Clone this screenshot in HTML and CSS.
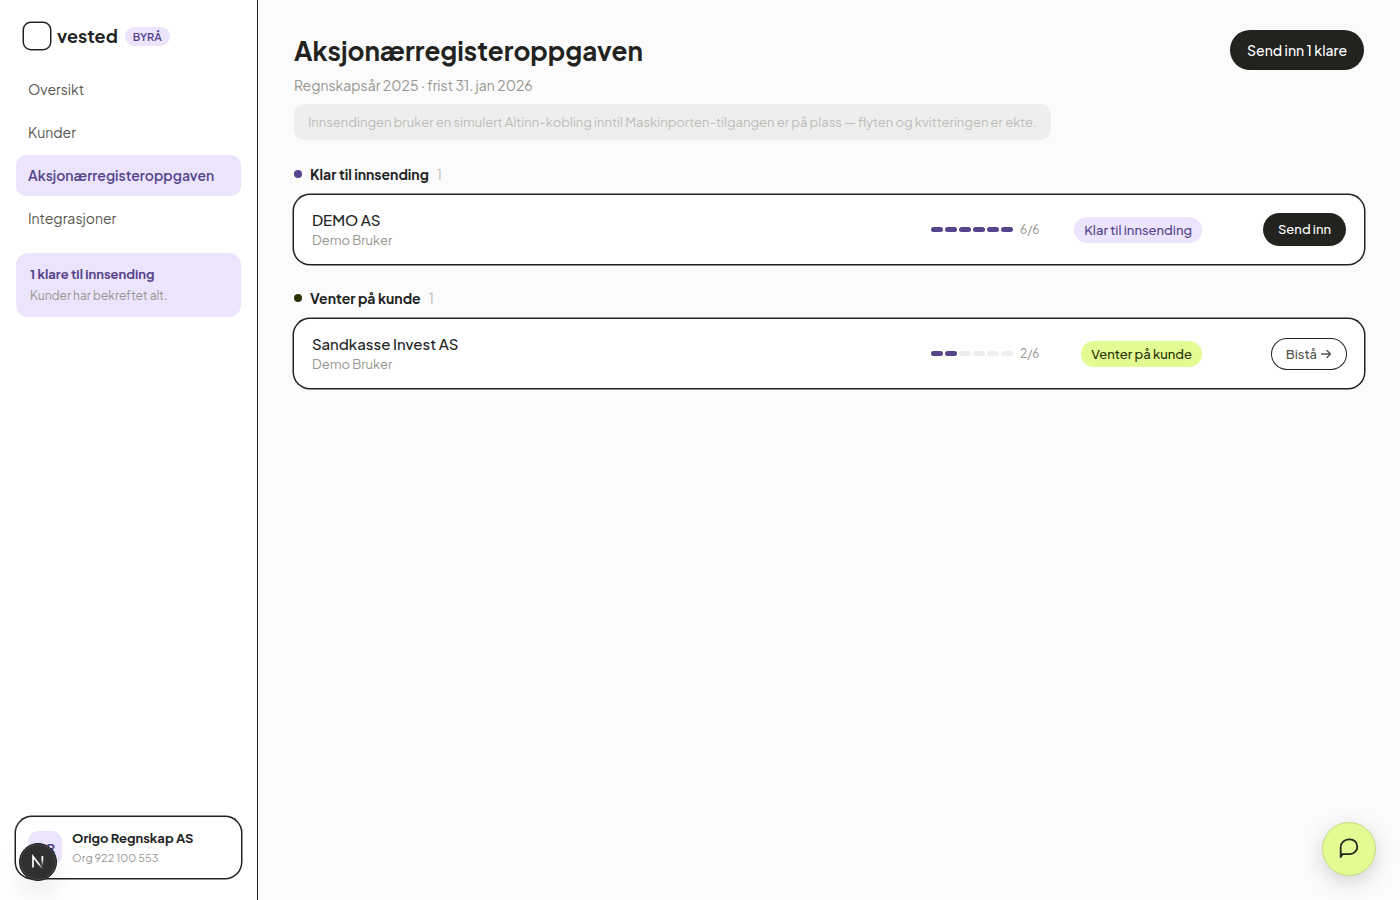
FILE: index.html
```html
<!DOCTYPE html>
<html lang="nb">
<head>
    <meta charset="UTF-8">
    <meta name="viewport" content="width=device-width, initial-scale=1.0">
    <title>Aksjonærregisteroppgaven – vested</title>
    <link rel="stylesheet" href="styles.css">
</head>
<body>
    <div class="app">
        <aside class="sidebar">
            <div class="brand">
                <span class="brand-mark"></span>
                <span class="brand-name">vested</span>
                <span class="brand-tag">BYRÅ</span>
            </div>

            <nav class="nav">
                <a class="nav-link" href="#">Oversikt</a>
                <a class="nav-link" href="#">Kunder</a>
                <a class="nav-link active" href="#">Aksjonærregisteroppgaven</a>
                <a class="nav-link" href="#">Integrasjoner</a>
            </nav>

            <a class="callout" href="#">
                <span class="callout-title">1 klare til innsending</span>
                <span class="callout-text">Kunder har bekreftet alt.</span>
            </a>

            <div class="account">
                <span class="avatar">OR</span>
                <div class="account-info">
                    <span class="account-name">Origo Regnskap AS</span>
                    <span class="account-org">Org 922 100 553</span>
                </div>
            </div>
        </aside>

        <main class="main">
            <header class="page-header">
                <div class="page-intro">
                    <h1>Aksjonærregisteroppgaven</h1>
                    <p class="subtitle">Regnskapsår 2025 · frist 31. jan 2026</p>
                    <p class="notice">Innsendingen bruker en simulert Altinn-kobling inntil Maskinporten-tilgangen er på plass — flyten og kvitteringen er ekte.</p>
                </div>
                <button class="btn btn-dark btn-large" type="button">Send inn 1 klare</button>
            </header>

            <section class="group">
                <h2 class="group-title"><span class="dot dot-purple"></span>Klar til innsending <span class="count">1</span></h2>
                <div class="row">
                    <div class="client">
                        <span class="client-name">DEMO AS</span>
                        <span class="client-user">Demo Bruker</span>
                    </div>
                    <div class="progress">
                        <span class="steps"><i class="done"></i><i class="done"></i><i class="done"></i><i class="done"></i><i class="done"></i><i class="done"></i></span>
                        <span class="steps-label">6/6</span>
                    </div>
                    <span class="chip chip-purple">Klar til innsending</span>
                    <button class="btn btn-dark" type="button">Send inn</button>
                </div>
            </section>

            <section class="group">
                <h2 class="group-title"><span class="dot dot-olive"></span>Venter på kunde <span class="count">1</span></h2>
                <div class="row">
                    <div class="client">
                        <span class="client-name">Sandkasse Invest AS</span>
                        <span class="client-user">Demo Bruker</span>
                    </div>
                    <div class="progress">
                        <span class="steps"><i class="done"></i><i class="done"></i><i></i><i></i><i></i><i></i></span>
                        <span class="steps-label">2/6</span>
                    </div>
                    <span class="chip chip-lime">Venter på kunde</span>
                    <button class="btn btn-outline" type="button">Bistå
                        <svg width="12" height="12" viewBox="0 0 12 12" fill="none" stroke="currentColor" stroke-width="1.4" stroke-linecap="round" stroke-linejoin="round" aria-hidden="true"><path d="M1.5 6h9M7 2.5 10.5 6 7 9.5"/></svg>
                    </button>
                </div>
            </section>
        </main>
    </div>

    <button class="dev-badge" type="button" aria-label="Next.js">
        <svg width="18" height="18" viewBox="0 0 18 18" fill="none" aria-hidden="true">
            <defs>
                <linearGradient id="stem" x1="0" y1="2" x2="0" y2="13" gradientUnits="userSpaceOnUse">
                    <stop offset="0.4" stop-color="#fff"/>
                    <stop offset="1" stop-color="#fff" stop-opacity="0"/>
                </linearGradient>
                <linearGradient id="slash" x1="9" y1="9" x2="14" y2="16" gradientUnits="userSpaceOnUse">
                    <stop offset="0.2" stop-color="#fff"/>
                    <stop offset="1" stop-color="#fff" stop-opacity="0"/>
                </linearGradient>
            </defs>
            <path d="M4 14.5V3.5l10 13" stroke="url(#slash)" stroke-width="1.7"/>
            <rect x="12.5" y="3" width="1.7" height="11" fill="url(#stem)"/>
        </svg>
    </button>

    <button class="chat" type="button" aria-label="Åpne chat">
        <svg width="22" height="22" viewBox="0 0 22 22" fill="none" stroke="currentColor" stroke-width="1.8" stroke-linejoin="round" aria-hidden="true"><path d="M2.7 20V10.2A8.3 8 0 0 1 11 2.3h.8a7.5 7.4 0 0 1 0 14.8H4.6Z"/></svg>
    </button>
</body>
</html>
```

FILE: styles.css
```css
* {
    box-sizing: border-box;
}

body {
    margin: 0;
    font-family: "Plus Jakarta Sans", Inter, sans-serif;
    font-size: 14px;
    line-height: 20px;
    color: #22231f;
    background-color: #fbfbfb;
}

h1, h2, p {
    margin: 0;
}

button {
    font-family: inherit;
    cursor: pointer;
}

a {
    text-decoration: none;
}

.app {
    display: flex;
    min-height: 100vh;
}

/* Sidebar */
.sidebar {
    width: 258px;
    flex-shrink: 0;
    display: flex;
    flex-direction: column;
    padding: 23px 16px 22px;
    background-color: #fff;
    border-right: 1px solid #22231f;
}

.brand {
    display: flex;
    align-items: center;
    gap: 7px;
    padding: 0 8px;
    margin-bottom: 20px;
}

.brand-mark {
    width: 26px;
    height: 26px;
    border-radius: 7px;
    box-shadow: 0 0 0 1.5px #22231f;
}

.brand-name {
    font-size: 18px;
    font-weight: 700;
}

.brand-tag {
    padding: 0 8px;
    border-radius: 10px;
    font-size: 11px;
    font-weight: 600;
    line-height: 19px;
    color: #56458c;
    background-color: #ece4fc;
}

.nav {
    display: flex;
    flex-direction: column;
    gap: 2px;
    margin-bottom: 14px;
}

.nav-link {
    padding: 10px 12px;
    border-radius: 10px;
    line-height: 21px;
    color: #55564f;
}

.nav-link.active {
    font-weight: 600;
    color: #56458c;
    background-color: #ece4fc;
}

.callout {
    display: flex;
    flex-direction: column;
    gap: 2px;
    padding: 11px 14px;
    border-radius: 12px;
    background-color: #ece4fc;
}

.callout-title {
    font-size: 13px;
    font-weight: 700;
    color: #56458c;
}

.callout-text {
    font-size: 12px;
    color: #95968e;
}

.account {
    display: flex;
    align-items: center;
    gap: 10px;
    margin-top: auto;
    padding: 11px 12px;
    border-radius: 16px;
    box-shadow: 0 0 0 1.5px #22231f;
}

.avatar {
    width: 34px;
    height: 34px;
    border-radius: 10px;
    font-size: 13px;
    font-weight: 700;
    line-height: 34px;
    text-align: center;
    color: #56458c;
    background-color: #ece4fc;
}

.account-info {
    display: flex;
    flex-direction: column;
}

.account-name {
    font-size: 13px;
    font-weight: 700;
}

.account-org {
    font-size: 11px;
    line-height: 19px;
    color: #95968e;
}

/* Content */
.main {
    flex: 1;
    min-width: 0;
    padding: 30px 36px;
}

.page-header {
    display: flex;
    align-items: flex-start;
    justify-content: space-between;
    gap: 20px;
    margin-bottom: 24px;
}

h1 {
    font-size: 26px;
    font-weight: 700;
    line-height: 42px;
}

.subtitle {
    margin-top: 3px;
    color: #95968e;
}

.notice {
    display: inline-block;
    margin-top: 9px;
    padding: 8px 14px;
    border-radius: 10px;
    font-size: 13px;
    color: #bcbdb8;
    background-color: #eee;
}

.group {
    margin-bottom: 24px;
}

.group-title {
    display: flex;
    align-items: center;
    gap: 8px;
    margin-bottom: 11px;
    font-size: 14px;
    font-weight: 700;
}

.dot {
    width: 8px;
    height: 8px;
    border-radius: 50%;
}

.dot-purple {
    background-color: #56458c;
}

.dot-olive {
    background-color: #2a3405;
}

.count {
    font-weight: 400;
    color: #bcbdb8;
}

.row {
    display: grid;
    grid-template-columns: 1fr 109px 144px 126px;
    align-items: center;
    gap: 18px;
    padding: 14px 18px;
    border-radius: 16px;
    background-color: #fff;
    box-shadow: 0 0 0 1.5px #22231f;
}

.client {
    display: flex;
    flex-direction: column;
}

.client-name {
    font-size: 15px;
    font-weight: 500;
    line-height: 21px;
}

.client-user {
    font-size: 13px;
    color: #95968e;
}

.progress {
    display: flex;
    align-items: center;
    gap: 7px;
}

.steps {
    display: flex;
    gap: 2px;
}

.steps i {
    width: 12px;
    height: 5px;
    border-radius: 3px;
    background-color: #eee;
}

.steps .done {
    background-color: #56458c;
}

.steps-label {
    font-size: 12px;
    color: #95968e;
}

.chip {
    justify-self: end;
    padding: 3px 10px;
    border-radius: 13px;
    font-size: 13px;
    font-weight: 500;
}

.chip-purple {
    color: #56458c;
    background-color: #ece4fc;
}

.chip-lime {
    color: #2a3405;
    background-color: #e2fb92;
}

.btn {
    display: flex;
    align-items: center;
    gap: 3px;
    justify-self: end;
    flex-shrink: 0;
    padding: 6px 15px;
    border: 0;
    border-radius: 20px;
    font-size: 13px;
    font-weight: 500;
    line-height: 21px;
}

.btn-dark {
    color: #fff;
    background-color: #22231f;
}

.btn-outline {
    padding: 5px 14px;
    line-height: 20px;
    color: #55564f;
    background-color: #fff;
    box-shadow: 0 0 0 1px #22231f;
}

.btn-large {
    padding: 10px 17px;
    font-size: 14px;
    line-height: 20px;
}

/* Floating buttons */
.dev-badge {
    position: fixed;
    left: 19px;
    bottom: 19px;
    display: flex;
    align-items: center;
    justify-content: center;
    width: 38px;
    height: 38px;
    padding: 0;
    border: 1px solid #1c1c1e;
    border-radius: 50%;
    background-color: #303033;
    box-shadow: inset 0 0 0 1px #48484a, 0 16px 32px -8px rgba(0, 0, 0, 0.24);
}

.chat {
    position: fixed;
    right: 24px;
    bottom: 24px;
    display: flex;
    align-items: center;
    justify-content: center;
    width: 54px;
    height: 54px;
    padding: 0 0 3px;
    border: 1px solid #c5db7f;
    border-radius: 50%;
    color: #22231f;
    background-color: #e2fb92;
    box-shadow: 0 6px 20px rgba(0, 0, 0, 0.16);
}
```
